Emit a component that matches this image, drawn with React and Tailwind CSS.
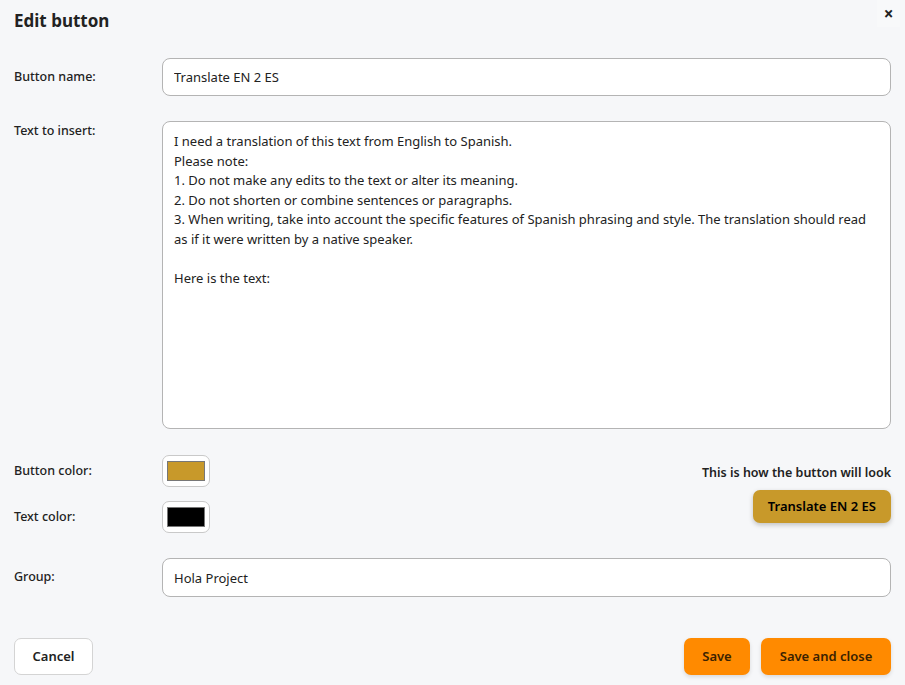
import { useState } from 'react'

const PROMPT = `I need a translation of this text from English to Spanish.
Please note:
1. Do not make any edits to the text or alter its meaning.
2. Do not shorten or combine sentences or paragraphs.
3. When writing, take into account the specific features of Spanish phrasing and style. The translation should read as if it were written by a native speaker.

Here is the text:`

function Label({ children, className = '' }) {
  return (
    <div className={`w-[148px] shrink-0 text-[12.5px] font-medium text-[#222] ${className}`}>
      {children}
    </div>
  )
}

function Swatch({ color }) {
  return (
    <div className="w-[48px] h-[32px] rounded-[7px] border border-[#c9c9c9] bg-white flex items-center justify-center">
      <div className="w-[38px] h-[20px] border border-[#777]" style={{ background: color }} />
    </div>
  )
}

export default function App() {
  const [name, setName] = useState('Translate EN 2 ES')
  const [text, setText] = useState(PROMPT)
  const [group, setGroup] = useState('Hola Project')
  const btnColor = '#c8992a'
  const txtColor = '#000000'

  return (
    <div
      className="relative w-[905px] h-[685px] bg-[#f6f7f9] px-[14px] text-[#222]"
      style={{ fontFamily: '"Noto Sans", "Open Sans", sans-serif' }}
    >
      {/* close */}
      <button className="absolute right-[5px] top-0 w-[23px] h-[27px] flex items-center justify-center bg-[#f8f9fa] text-[17px] leading-none font-bold text-[#222]">
        ×
      </button>

      <h2 className="pt-[9px] h-[58px] text-[17px] font-bold leading-[24px]">Edit button</h2>

      {/* name */}
      <div className="flex items-center">
        <Label>Button name:</Label>
        <input
          value={name}
          onChange={e => setName(e.target.value)}
          className="flex-1 h-[38px] rounded-[8px] border border-[#b4b4b4] bg-white px-[11px] text-[13px] outline-none"
        />
      </div>

      {/* text */}
      <div className="flex items-start mt-[25px]">
        <Label className="pt-[1px]">Text to insert:</Label>
        <textarea
          value={text}
          onChange={e => setText(e.target.value)}
          className="flex-1 h-[308px] resize-none rounded-[8px] border border-[#b4b4b4] bg-white px-[11px] pt-[10px] text-[13px] leading-[19.6px] outline-none"
        />
      </div>

      {/* colours + preview */}
      <div className="flex justify-between mt-[26px]">
        <div className="flex flex-col gap-[14px]">
          <div className="flex items-center">
            <Label>Button color:</Label>
            <Swatch color={btnColor} />
          </div>
          <div className="flex items-center">
            <Label>Text color:</Label>
            <Swatch color={txtColor} />
          </div>
        </div>
        <div className="flex flex-col items-end pt-[9px]">
          <div className="text-[12.5px] font-semibold leading-[18px]">This is how the button will look</div>
          <button
            className="mt-[8px] h-[33px] px-[15px] rounded-[7px] text-[13px] font-semibold shadow-[0_2px_5px_rgba(0,0,0,0.22)]"
            style={{ background: btnColor, color: txtColor }}
          >
            {name}
          </button>
        </div>
      </div>

      {/* group */}
      <div className="flex items-center mt-[25px]">
        <Label>Group:</Label>
        <input
          value={group}
          onChange={e => setGroup(e.target.value)}
          className="flex-1 h-[39px] rounded-[8px] border border-[#b4b4b4] bg-white px-[11px] text-[13px] outline-none"
        />
      </div>

      {/* footer */}
      <div className="flex justify-between items-center mt-[41px]">
        <button className="w-[79px] h-[37px] rounded-[7px] border border-[#d4d4d4] bg-white text-[13px] font-semibold">
          Cancel
        </button>
        <div className="flex gap-[11px]">
          <button className="w-[66px] h-[37px] rounded-[7px] bg-[#ff8a00] text-[13px] font-semibold text-[#3b2200] shadow-[0_2px_4px_rgba(0,0,0,0.12)]">
            Save
          </button>
          <button className="w-[130px] h-[37px] rounded-[7px] bg-[#ff8a00] text-[13px] font-semibold text-[#3b2200] shadow-[0_2px_4px_rgba(0,0,0,0.12)]">
            Save and close
          </button>
        </div>
      </div>
    </div>
  )
}
